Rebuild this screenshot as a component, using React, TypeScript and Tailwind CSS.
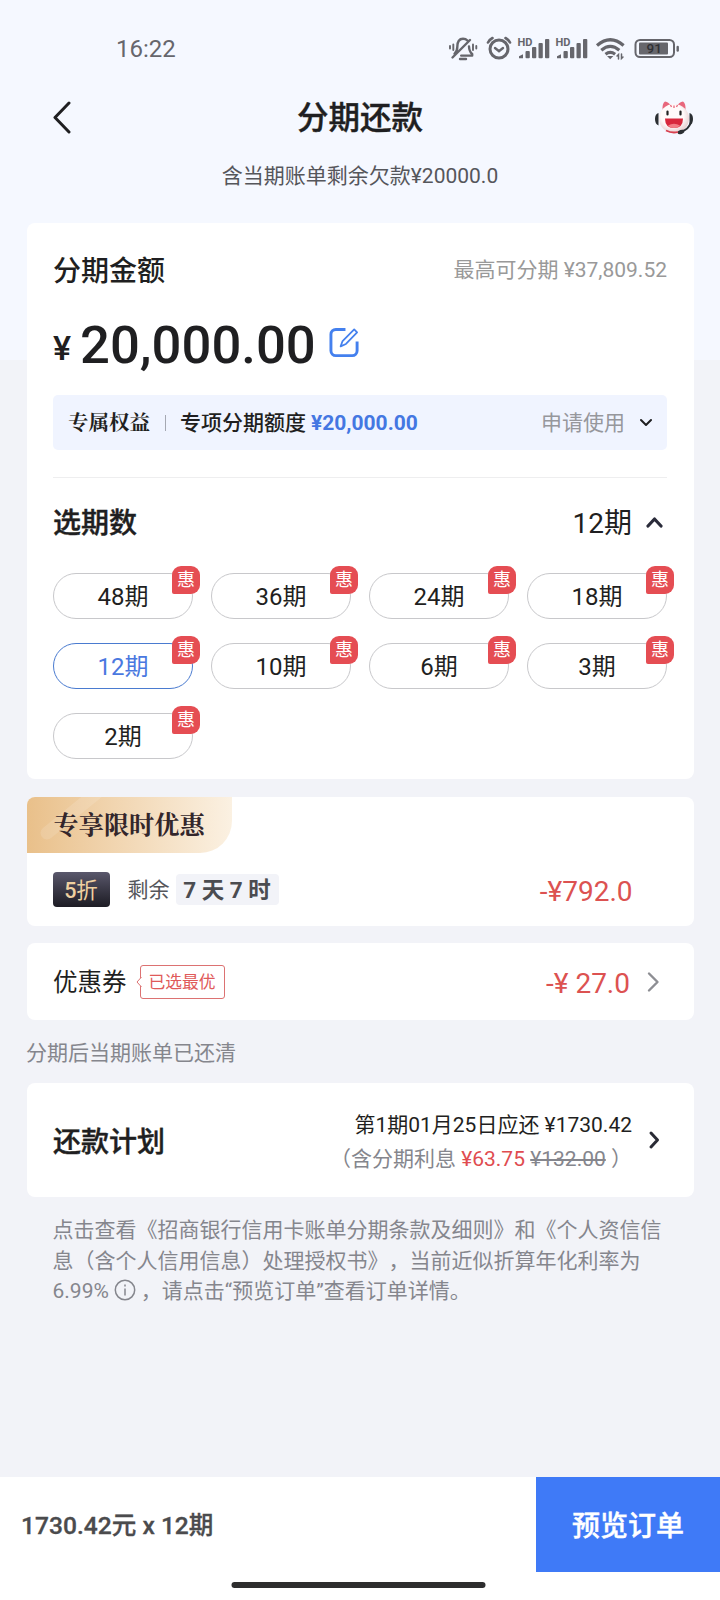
import React, { useState } from "react";

interface Term {
  id: number;
  label: string;
}

const TERMS: Term[] = [
  { id: 48, label: "48期" },
  { id: 36, label: "36期" },
  { id: 24, label: "24期" },
  { id: 18, label: "18期" },
  { id: 12, label: "12期" },
  { id: 10, label: "10期" },
  { id: 6, label: "6期" },
  { id: 3, label: "3期" },
  { id: 2, label: "2期" },
];

const Chevron: React.FC<{ className: string; points: string; box: string; weight?: number }> = ({
  className,
  points,
  box,
  weight = 2.6,
}) => (
  <svg className={className} viewBox={box} fill="none" stroke="currentColor" strokeWidth={weight} strokeLinecap="round" strokeLinejoin="round">
    <polyline points={points} />
  </svg>
);

const StatusIcons = () => (
  <svg className="h-[30px] w-[240px]" viewBox="440 34 240 30" fill="none" stroke="#66666c" strokeWidth="2.4" strokeLinecap="round">
    {/* muted bell */}
    <path d="M454.500 54c2.200-2 2.800-4 2.800-7 0-5.500 2.200-8.300 5.700-8.300 2 0 3.400.7 4.400 1.800M469 46.500c.2 3.500 1 5.800 3.200 7.500v1.600h-11M452.500 57.500l17.500-17.500" strokeLinejoin="round" />
    <path d="M460 59h6" strokeWidth="2.400" />
    <path d="M453.300 44.500v5.500M450 46v2.500M473 44.500v5.500M476.300 46v2.500" strokeWidth="1.900" />
    {/* alarm */}
    <circle cx="499" cy="49" r="9" strokeWidth="3" />
    <path d="M495 48l4 3.200 4-3.200" />
    <path d="M488 42.500q1.500-3 4.500-4.500M510 42.500q-1.500-3-4.500-4.500" strokeWidth="2.600" />
    {/* signal bars */}
    {[518, 556].map((x) => (
      <g key={x} fill="#66666c" stroke="none">
        <text x={x - 0.5} y="46" fontSize="10.5" fontWeight="700" fontFamily="Roboto" textLength="15" lengthAdjust="spacingAndGlyphs">
          HD
        </text>
        <path d={`M${x + 1} 58.200v-2l4-2v4z`} />
        <rect x={x + 7.5} y="51" width="4.300" height="7.200" rx="1" />
        <rect x={x + 14} y="47" width="4.300" height="11.200" rx="1" />
        <rect x={x + 20.5} y="43" width="4.300" height="15.200" rx="1" />
        <rect x={x + 27} y="39" width="4.300" height="19.200" rx="1" />
      </g>
    ))}
    {/* wifi */}
    <path d="M597 45.500q13.300-11.500 26.600 0M601.300 50.200q9-7.600 18 0M605.500 54.200q4.800-3.600 9.600 0" strokeWidth="3.200" strokeLinecap="butt" />
    <path d="M607 56h6.400l-3.200 3.300z" fill="#66666c" stroke="none" />
    <path d="M618.500 59v-4.500l-1.500 1.500M621.500 54v4.500l1.500-1.500" strokeWidth="1.500" />
    {/* battery */}
    <rect x="635.500" y="40" width="38.500" height="17" rx="4.500" strokeWidth="2" />
    <rect x="639" y="42.600" width="29" height="11.800" rx="1" fill="#66666c" stroke="none" />
    <path d="M677.700 47v3.500" strokeWidth="2.400" />
    <text x="646.5" y="53.400" fontSize="13.5" fontWeight="500" fill="#303034" stroke="none" fontFamily="Roboto">
      91
    </text>
  </svg>
);

const Mascot = () => (
  <svg className="h-[36px] w-[40px]" viewBox="0 0 40 36">
    <defs>
      <radialGradient id="face" cx="45%" cy="40%" r="62%">
        <stop offset="60%" stopColor="#fffafa" />
        <stop offset="100%" stopColor="#e6cbcc" />
      </radialGradient>
    </defs>
    <path d="M8.500 11Q8 3 11 1.500q4 .5 6 4.500zM31.500 11q.5-8-2.500-9.500-4 .5-6 4.500z" fill="#e8677c" />
    <path d="M4.500 13Q1 14 1 19t3.500 6.500zM35.500 13q3.500 1 3.500 6t-3.500 6.500z" fill="#2b2f33" />
    <ellipse cx="20" cy="18.500" rx="15" ry="14.500" fill="url(#face)" />
    <path d="M37 22q-2.500 8-10 9.500" stroke="#2b2f33" strokeWidth="2" fill="none" />
    <ellipse cx="27" cy="32" rx="3.500" ry="2" fill="#2b2f33" transform="rotate(-20 27 32)" />
    <path d="M16.500 5l1 2M20 5.500v2.500M23.500 5l-1 2" stroke="#e8677c" strokeWidth="1.300" />
    <path d="M13.500 11.500v3M26.500 11.500v3" stroke="#222" strokeWidth="2.200" strokeLinecap="round" />
    <path d="M11 18.500h18q0 9.500-9 9.500t-9-9.500z" fill="#d8283c" />
    <path d="M14 25.500q6-3.500 12 0-2 2.500-6 2.500t-6-2.500z" fill="#f27c84" />
    <path d="M12 30.500q6 3 12 1.500" stroke="#d8404f" strokeWidth="1.800" fill="none" />
  </svg>
);

const App: React.FC = () => {
  const [selected, setSelected] = useState(12);

  return (
    <div className="flex h-[1600px] w-[720px] flex-col overflow-hidden bg-[linear-gradient(#f5f8ff_360px,#f2f3f8_360px)] font-[Roboto,'Noto_Sans_CJK_SC',sans-serif] text-[#1f1f21]">
      <div className="flex h-[98px] shrink-0 items-start justify-between pt-[34px] pr-10 pl-[116px]">
        <span className="text-[24px] leading-[31px] text-[#66666c]">16:22</span>
        <StatusIcons />
      </div>

      <header className="grid h-[40px] shrink-0 grid-cols-[1fr_auto_1fr] items-center px-[26px]">
        <Chevron className="ml-[26px] h-[34px] w-5" box="0 0 20 34" points="17,2 3,16.5 17,31" weight={3} />
        <h1 className="pt-[2px] text-center text-[31.5px] leading-[38px] font-medium whitespace-nowrap [-webkit-text-stroke:0.4px]">分期还款</h1>
        <div className="flex justify-end">
          <Mascot />
        </div>
      </header>
      <p className="mt-[23px] h-[61.5px] shrink-0 text-center text-[21px] leading-[31px] text-[#55565b]">含当期账单剩余欠款¥20000.0</p>

      <section className="mx-[26.5px] h-[556.5px] shrink-0 rounded-lg bg-white px-[26.5px] pt-[29px]">
        <div className="flex h-10 items-center justify-between">
          <h2 className="text-[28px] font-medium">分期金额</h2>
          <span className="-mt-px text-[21px] text-[#999]">最高可分期 ¥37,809.52</span>
        </div>
        <div className="mt-[24px] flex h-[60px] items-center">
          <span className="pt-1.5 text-[34px] font-medium">¥</span>
          <span className="ml-[9px] text-[52.6px] font-medium">20,000.00</span>
          <svg className="-mt-1.5 ml-[13px] h-[31px] w-[31px]" viewBox="0 0 32 32" fill="none" stroke="#4480ee" strokeLinecap="round" strokeLinejoin="round">
            <path d="M17 2.500H7a5 5 0 0 0-5 5v17a5 5 0 0 0 5 5h17a5 5 0 0 0 5-5V15" strokeWidth="3" strokeLinecap="butt" />
            <path d="M12 20l2-5.500L26 2.500l3 3L17.500 17.500z" strokeWidth="1.800" />
          </svg>
        </div>
        <div className="mt-[19.5px] flex h-[55px] items-center rounded-[5px] bg-[#f0f4ff] px-[15px]">
          <span className="-mt-0.5 font-['Noto_Serif_CJK_SC','Noto_Sans_CJK_SC',serif] text-[20.5px] font-bold">专属权益</span>
          <span className="mx-[15px] h-4 w-px bg-[#a5a8b2]" />
          <span className="-ml-px pt-[3px] text-[21px] font-medium">专项分期额度</span>
          <span className="ml-[5px] pt-[3px] text-[21px] font-bold text-[#4477e2]">¥20,000.00</span>
          <span className="ml-auto pt-[3px] text-[21px] text-[#96979c]">申请使用</span>
          <Chevron className="ml-[15px] h-[10px] w-[12px]" box="0 0 12 10" points="1,2 6,7 11,2" weight={2} />
        </div>
        <div className="mt-[27px] h-px bg-[#eeeeef]" />
        <div className="mt-[25.5px] flex h-10 items-center">
          <h2 className="text-[28px] font-medium [-webkit-text-stroke:0.4px]">选期数</h2>
          <span className="mr-[1px] ml-auto text-[28px]">12期</span>
          <Chevron className="-mt-1 mr-[4px] ml-[13px] h-3 w-[17px] text-[#2a2b3a]" box="0 0 17 12" points="2,10 8.5,3 15,10" weight={3.2} />
        </div>
        <div className="mt-[29px] grid grid-cols-4 gap-x-[18px] gap-y-[24px]">
          {TERMS.map((term) => (
            <button
              key={term.id}
              onClick={() => setSelected(term.id)}
              className={`relative h-[46px] rounded-full border pt-px text-[24px] leading-[44px] ${
                selected === term.id ? "border-[#4a7bd0] text-[#4a78e0]" : "border-[#c8c8cb]"
              }`}
            >
              {term.label}
              <span className="absolute -top-2 -right-2 flex h-7 w-7 items-center justify-center rounded-[9px] rounded-bl-[2px] bg-[#e54d53] text-[18px] leading-none text-white">
                惠
              </span>
            </button>
          ))}
        </div>
      </section>

      <section className="mx-[26.5px] mt-[18px] h-[129px] shrink-0 overflow-hidden rounded-lg bg-white">
        <div className="relative flex h-[56px] w-[205px] items-center overflow-hidden rounded-br-[32px] bg-linear-to-r from-[#e9c08a] to-[#fbf1e2] pl-[27px]">
          <svg className="absolute top-0 left-0 h-14 w-24" viewBox="0 0 96 56" fill="none" stroke="#fff" strokeOpacity="0.13" strokeWidth="13" strokeLinecap="round">
            <path d="M20 36L72-6" />
          </svg>
          <span className="relative -mt-[3px] font-['Noto_Serif_CJK_SC','Noto_Sans_CJK_SC',serif] text-[25.2px] font-bold whitespace-nowrap text-[#33262b]">
            专享限时优惠
          </span>
        </div>
        <div className="flex h-[73px] items-center pr-[61px] pl-[26px]">
          <span className="flex h-[35px] w-[57px] items-center justify-center rounded-[4px] bg-linear-to-b from-[#5a586c] to-[#1d1c24] pt-[3px] text-[21.5px] text-[#efd0a0]">
            <b className="font-medium">5</b>折
          </span>
          <span className="ml-[18px] pt-[3px] text-[21px] text-[#55565b]">剩余</span>
          <span className="ml-[6px] flex h-[31px] w-[103px] items-center justify-center rounded-[4px] bg-[#f2f3f8] pt-[3px] text-[22.5px] font-bold whitespace-pre text-[#4b4c50]">7 天 7 时</span>
          <span className="ml-auto pt-[4px] text-[28px] text-[#dc5251]">-¥792.0</span>
        </div>
      </section>

      <section className="mx-[26.5px] mt-[17px] flex h-[77px] shrink-0 items-center rounded-lg bg-white pr-[33.5px] pl-[26.5px]">
        <span className="pt-1 text-[24.5px]">优惠券</span>
        <div className="relative ml-[13px] flex h-[34px] w-[85px] items-center justify-center rounded-[3px] border border-[#dc7272] pt-[3px] text-[16.8px] text-[#e05a5a]">
          已选最优
          <svg className="absolute top-[10px] -left-[5px] h-3 w-[6px]" viewBox="0 0 6 12">
            <path d="M5.500 1L1 6l4.500 5" fill="#fff" stroke="#dc7272" />
          </svg>
        </div>
        <span className="ml-auto pt-[4px] text-[28px] text-[#dc5251]">-¥ 27.0</span>
        <Chevron className="ml-[17px] h-[22px] w-[13px] text-[#8d8e93]" box="0 0 13 22" points="2,2.500 10.5,11 2,19.5" weight={2.4} />
      </section>

      <p className="mx-[26px] mt-[17.5px] h-[45.5px] shrink-0 text-[21px] leading-[30px] text-[#85868d]">分期后当期账单已还清</p>

      <section className="mx-[26.5px] flex h-[114px] shrink-0 items-center rounded-lg bg-white pr-[33.5px] pl-[26.5px]">
        <h2 className="pt-1.5 text-[28px] font-medium [-webkit-text-stroke:0.4px]">还款计划</h2>
        <div className="ml-auto pt-[4px] text-right text-[21px] leading-[34.5px]">
          <p>第1期01月25日应还 ¥1730.42</p>
          <p className="text-[#85868d]">
            （含分期利息 <span className="text-[#e04c50]">¥63.75</span> <s>¥132.00</s> ）
          </p>
        </div>
        <Chevron className="ml-[16px] h-5 w-[12px] text-[#2a2b35]" box="0 0 12 20" points="3,3 9.5,10 3,17" weight={3} />
      </section>

      <p className="mx-[52.500px] mt-[18px] text-[21px] leading-[30.6px] whitespace-nowrap text-[#85868d] [text-spacing-trim:space-all]">
        点击查看《招商银行信用卡账单分期条款及细则》和《个人资信信
        <br />
        息（含个人信用信息）处理授权书》，当前近似折算年化利率为
        <br />
        6.99%
        <svg className="mx-[5px] -mt-1.5 inline h-[22px] w-[22px] align-middle" viewBox="0 0 22 22" fill="none" stroke="currentColor" strokeWidth="1.500">
          <circle cx="11" cy="11" r="9.700" />
          <path d="M11 9.500v7M11 5.500v2" />
        </svg>
        ，请点击“预览订单”查看订单详情。
      </p>

      <footer className="mt-auto flex h-[123px] shrink-0 flex-col bg-white">
        <div className="flex h-[95px] items-center justify-between">
          <span className="ml-[21px] pt-1 text-[24.6px] font-medium text-[#4b4b4d] [-webkit-text-stroke:0.3px]">1730.42元 x 12期</span>
          <button className="h-full w-[184px] bg-[#3f7af7] pt-1 text-[28px] font-medium text-white [-webkit-text-stroke:0.4px]">预览订单</button>
        </div>
        <div className="mx-auto mt-[10px] h-[6px] w-[254px] translate-x-[-1.5px] rounded-full bg-[#2d2d2e]" />
      </footer>
    </div>
  );
};

export default App;
